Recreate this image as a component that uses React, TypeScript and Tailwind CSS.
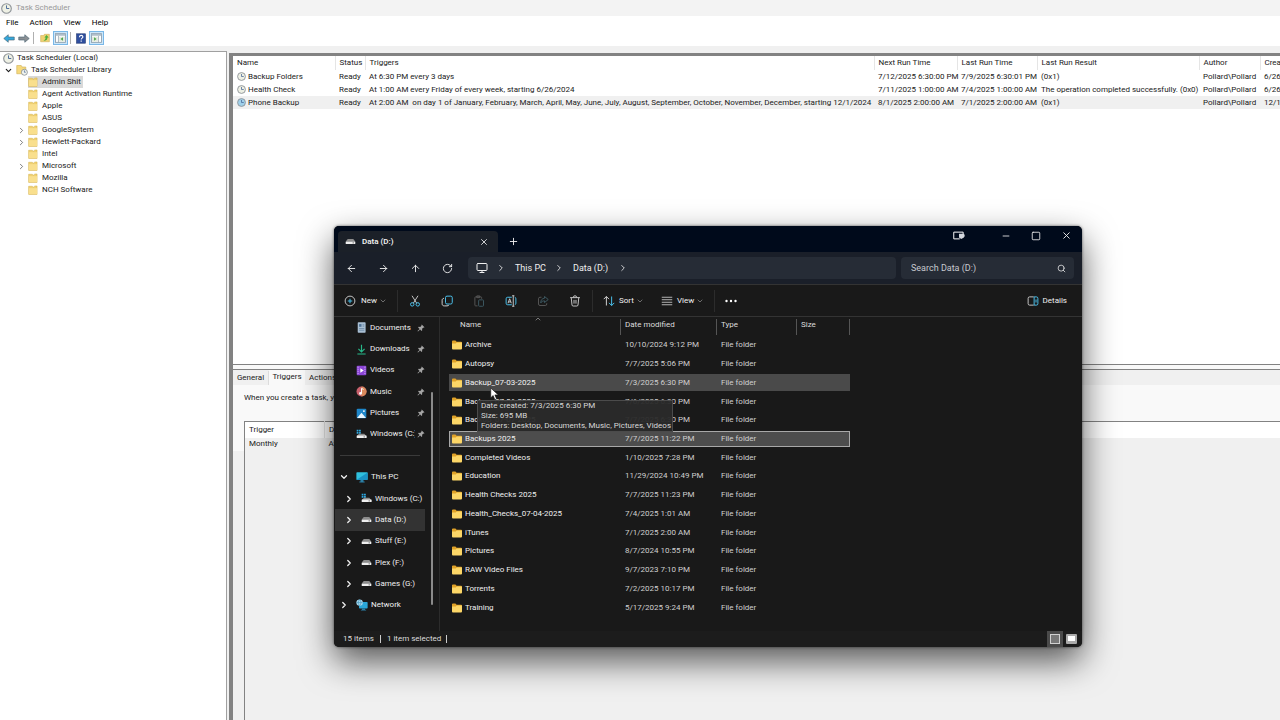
import React, { useState } from 'react';
import {
  ArrowLeft,
  ArrowRight,
  ArrowUp,
  ChevronDown,
  ChevronRight,
  ChevronUp,
  Minus,
  Monitor,
  Plus,
  RotateCw,
  Search,
  Square,
  X,
} from 'lucide-react';

const treeItems = [
  { name: 'Admin Shit' },
  { name: 'Agent Activation Runtime' },
  { name: 'Apple' },
  { name: 'ASUS' },
  { name: 'GoogleSystem', children: true },
  { name: 'Hewlett-Packard', children: true },
  { name: 'Intel' },
  { name: 'Microsoft', children: true },
  { name: 'Mozilla' },
  { name: 'NCH Software' },
];

const tasks = [
  {
    name: 'Backup Folders',
    triggers: 'At 6:30 PM every 3 days',
    next: '7/12/2025 6:30:00 PM',
    last: '7/9/2025 6:30:01 PM',
    result: '(0x1)',
    created: '6/26/2024',
  },
  {
    name: 'Health Check',
    triggers: 'At 1:00 AM every Friday of every week, starting 6/26/2024',
    next: '7/11/2025 1:00:00 AM',
    last: '7/4/2025 1:00:00 AM',
    result: 'The operation completed successfully. (0x0)',
    created: '6/26/2024',
  },
  {
    name: 'Phone Backup',
    triggers:
      'At 2:00 AM  on day 1 of January, February, March, April, May, June, July, August, September, October, November, December, starting 12/1/2024',
    next: '8/1/2025 2:00:00 AM',
    last: '7/1/2025 2:00:00 AM',
    result: '(0x1)',
    created: '12/1/2024',
  },
];

const folders = [
  { name: 'Archive', modified: '10/10/2024 9:12 PM' },
  { name: 'Autopsy', modified: '7/7/2025 5:06 PM' },
  { name: 'Backup_07-03-2025', modified: '7/3/2025 6:30 PM' },
  { name: 'Backup_07-06-2025', modified: '7/6/2025 6:30 PM' },
  { name: 'Backup_07-07-2025', modified: '7/7/2025 6:30 PM' },
  { name: 'Backups 2025', modified: '7/7/2025 11:22 PM' },
  { name: 'Completed Videos', modified: '1/10/2025 7:28 PM' },
  { name: 'Education', modified: '11/29/2024 10:49 PM' },
  { name: 'Health Checks 2025', modified: '7/7/2025 11:23 PM' },
  { name: 'Health_Checks_07-04-2025', modified: '7/4/2025 1:01 AM' },
  { name: 'iTunes', modified: '7/1/2025 2:00 AM' },
  { name: 'Pictures', modified: '8/7/2024 10:55 PM' },
  { name: 'RAW Video Files', modified: '9/7/2023 7:10 PM' },
  { name: 'Torrents', modified: '7/2/2025 10:17 PM' },
  { name: 'Training', modified: '5/17/2025 9:24 PM' },
];

/* ---------- icons ---------- */

const ClockIcon = ({ className = 'w-[11px] h-[11px]', face = '#eef0e4' }) => (
  <svg viewBox="0 0 16 16" className={`shrink-0 ${className}`}>
    <circle cx="8" cy="8" r="7" fill={face} stroke="#8d9297" strokeWidth="1.6" />
    <path d="M8 3.5V8h4" fill="none" stroke="#4a6a9a" strokeWidth="1.4" />
  </svg>
);

const TreeFolder = () => (
  <svg viewBox="0 0 16 16" className="w-[10px] h-[10px] shrink-0">
    <path d="M1 2h6l1 2 3-2.5h3.5V15H1z" fill="#f0d070" stroke="#d3b04c" strokeWidth="0.8" />
    <path d="M1.5 5h13v9.5h-13z" fill="#f9df8d" />
  </svg>
);

const LibraryIcon = () => (
  <svg viewBox="0 0 16 16" className="w-[12px] h-[12px] shrink-0">
    <path d="M1 2h6l1 2h5v9H1z" fill="#f6d97c" stroke="#cfae55" strokeWidth="0.8" />
    <circle cx="11.2" cy="11" r="4" fill="#f2f5ee" stroke="#7e858c" />
    <path d="M11.2 8.5V11H13" fill="none" stroke="#4a6a9a" />
  </svg>
);

const BlockArrow = ({ fill, flip = false }: { fill: string; flip?: boolean }) => (
  <svg viewBox="0 0 16 12" className={flip ? 'w-[12px] h-[9px] -scale-x-100' : 'w-[12px] h-[9px]'}>
    <path d="M1 6l6-5v3h8v4H7v3z" fill={fill} stroke="#44606e" strokeWidth="0.8" />
  </svg>
);

const UpFolderIcon = () => (
  <svg viewBox="0 0 16 16" className="w-[10px] h-[10px]">
    <path d="M1 4h5l1-2h8v12H1z" fill="#f0d272" stroke="#c9a94a" strokeWidth="0.8" />
    <path d="M4 12c3 0 5-2 5-5H7l3.5-4L14 7h-2c0 4-3 6-8 5z" fill="#4caf3c" />
  </svg>
);

const PaneIcon = ({ flip = false }: { flip?: boolean }) => (
  <svg viewBox="0 0 16 14" className={flip ? 'w-[11px] h-[10px] -scale-x-100' : 'w-[11px] h-[10px]'}>
    <rect x="0.7" y="0.7" width="14.6" height="12.6" fill="#fff" stroke="#8799a8" strokeWidth="1.2" />
    <path d="M1 2.5h14" stroke="#a9b9c6" strokeWidth="2.4" />
    <path d="M5 4v9" stroke="#8799a8" />
    <rect x="6" y="5" width="8.500" height="7.500" fill="#e3eadf" />
    <path d="M11.500 6v5L8 8.500z" fill="#46a345" />
  </svg>
);

const HelpIcon = () => (
  <svg viewBox="0 0 16 16" className="w-[10px] h-[11px]">
    <rect x="1" y="0.5" width="14" height="15" fill="#2f4f9f" stroke="#1e356f" />
    <path d="M5.500 6c0-4 5.500-4 5.500-.5 0 2-2.700 2-2.700 4.200M8.300 11.300v2" fill="none" stroke="#fff" strokeWidth="1.8" />
  </svg>
);

const DriveIcon = ({ className = 'w-[11px] h-[11px]' }) => (
  <svg viewBox="0 0 16 16" className={`shrink-0 ${className}`}>
    <path d="M4 4.500h8L15 8H1z" fill="#8c8c8c" />
    <rect x="1" y="8" width="14" height="3.600" rx="0.800" fill="#efefef" />
    <path d="M11 10h2" stroke="#3a3a3a" />
  </svg>
);

const SystemDriveIcon = () => (
  <svg viewBox="0 0 16 16" className="w-[11px] h-[11px] shrink-0">
    <path d="M1 1h2.600v2.600H1zM4.400 1H7v2.600H4.400zM1 4.400h2.600V7H1zM4.400 4.400H7V7H4.400z" fill="#2ea8e0" />
    <path d="M4.500 7H12l3 3H1z" fill="#8c8c8c" />
    <rect x="1" y="9.500" width="14.500" height="3.600" rx="0.800" fill="#efefef" />
    <path d="M11 11.500h2" stroke="#3a3a3a" />
  </svg>
);

const FolderIcon = () => (
  <svg viewBox="0 0 16 14" className="w-[12px] h-[10px] shrink-0">
    <path d="M1 2c0-.8.5-1.300 1.300-1.300h3.500L7.500 2.500h6.200c.8 0 1.300.5 1.300 1.300V9H1z" fill="#e0a228" />
    <path d="M1 4.800h5.200l1.500-1.300H15v8.400c0 .8-.5 1.300-1.300 1.300H2.300c-.8 0-1.300-.5-1.300-1.300z" fill="#fcd667" />
  </svg>
);

const DocumentsIcon = () => (
  <svg viewBox="0 0 16 16" className="w-[11px] h-[11px]">
    <rect x="2.500" y="0.500" width="11.500" height="15" rx="1" fill="#a9bfd3" />
    <rect x="4.500" y="3" width="3.500" height="4" fill="#4f7396" />
    <path d="M9.500 4H12M9.500 6H12M4.500 9.500H12M4.500 12H12" stroke="#5d7c99" />
  </svg>
);

const DownloadsIcon = () => (
  <svg viewBox="0 0 16 16" className="w-[11px] h-[11px]">
    <path d="M8 1v10M3.500 7L8 11.500 12.500 7M2 14.500h12" fill="none" stroke="#27b98a" strokeWidth="1.700" />
  </svg>
);

const VideosIcon = () => (
  <svg viewBox="0 0 16 16" className="w-[11px] h-[11px]">
    <rect x="1" y="1" width="14" height="14" rx="1.500" fill="#8b45d6" />
    <path d="M3 2.500v11M13 2.500v11" stroke="#d8b8f8" strokeWidth="1.400" strokeDasharray="1.500 1.500" />
    <path d="M6.300 4.800v6.400L11.300 8z" fill="#fff" />
  </svg>
);

const MusicIcon = () => (
  <svg viewBox="0 0 16 16" className="w-[11px] h-[11px]">
    <circle cx="8" cy="8" r="7.300" fill="#c8606c" />
    <path d="M8 .7A7.300 7.300 0 0 1 8 15.300z" fill="#d98a5c" />
    <path d="M8 10.800V3.500l3 1.500" fill="none" stroke="#fff" strokeWidth="1.400" />
    <circle cx="6.500" cy="10.800" r="2" fill="#fff" />
  </svg>
);

const PicturesIcon = () => (
  <svg viewBox="0 0 16 16" className="w-[11px] h-[11px]">
    <rect x="1" y="1" width="14" height="14" rx="1.500" fill="#1d86c9" />
    <path d="M1.500 14.500L8 7l6.500 7.500z" fill="#e8f6ff" />
    <circle cx="11.500" cy="4.500" r="1.400" fill="#fff" />
  </svg>
);

const ThisPcIcon = () => (
  <svg viewBox="0 0 16 16" className="w-[12px] h-[12px]">
    <rect x="0.500" y="1.500" width="15" height="10.500" rx="1" fill="#2fc0dd" />
    <path d="M.5 12L15.500 2v9a1 1 0 0 1-1 1z" fill="#1a93c4" />
    <path d="M6 12h4v2.500H6zM4.500 14h7v1.200h-7z" fill="#2b7fa5" />
  </svg>
);

const NetworkIcon = () => (
  <svg viewBox="0 0 16 16" className="w-[12px] h-[12px]">
    <rect x="4" y="4" width="11.500" height="8.500" rx="1" fill="#2aa7d8" />
    <path d="M8 12.500h4v2H8zM6.500 14.200h7v1.200h-7z" fill="#2b7fa5" />
    <circle cx="4.800" cy="4.800" r="4.300" fill="#a6d8ee" />
    <path d="M.8 4.800h8M4.800.8c-2.500 2.500-2.500 5.500 0 8M4.800.8c2.500 2.500 2.500 5.500 0 8" fill="none" stroke="#3c8fb8" strokeWidth="0.800" />
  </svg>
);

const PinIcon = () => (
  <svg viewBox="0 0 16 16" className="w-[8px] h-[8px] shrink-0">
    <path d="M9.500 1L15 6.500l-1.500.8-.8-.2-2.500 2.500.2 3-1.200 1.200-3-3L2 15l-1-1 4.200-4.200-3-3L3.400 5.600l3 .2L9 3.300 8.700 2.500z" fill="#a5a5a5" />
  </svg>
);

const CutIcon = () => (
  <svg viewBox="0 0 16 16" fill="none" className="w-[12px] h-[12px]">
    <path d="M4 1l6.300 10M12 1L5.700 11" stroke="#d5d5d5" strokeWidth="1.200" />
    <circle cx="4.300" cy="12.500" r="2.300" stroke="#4cc2ee" strokeWidth="1.300" />
    <circle cx="11.700" cy="12.500" r="2.300" stroke="#4cc2ee" strokeWidth="1.300" />
  </svg>
);

const CopyIcon = () => (
  <svg viewBox="0 0 16 16" fill="none" className="w-[12px] h-[12px]">
    <rect x="6" y="1.500" width="9" height="10.500" rx="2" stroke="#4cc2ee" strokeWidth="1.300" />
    <path d="M4 4.500c-1.500 0-2.500 1-2.500 2.500v4.500c0 2 1 3 3 3H8c1.200 0 2-.5 2.500-1" stroke="#d5d5d5" strokeWidth="1.300" />
  </svg>
);

const PasteIcon = () => (
  <svg viewBox="0 0 16 16" fill="none" className="w-[12px] h-[12px]">
    <path d="M6 14.500H3.500a1 1 0 0 1-1-1V3.500a1 1 0 0 1 1-1h7a1 1 0 0 1 1 1V5M5 1.200h4v2.300H5z" stroke="#5a5a5a" strokeWidth="1.200" />
    <rect x="7.500" y="6.500" width="6.500" height="8.500" rx="1" stroke="#3f5d68" strokeWidth="1.200" />
  </svg>
);

const RenameIcon = () => (
  <svg viewBox="0 0 16 16" fill="none" className="w-[12px] h-[12px]">
    <path d="M9 3H3.500a2 2 0 0 0-2 2v6a2 2 0 0 0 2 2H9M13 3a2 2 0 0 1 1.500 2v6a2 2 0 0 1-1.500 2" stroke="#4cc2ee" strokeWidth="1.300" />
    <path d="M11 1v14M9.500 1h3M9.500 15h3M4 11l2.200-6 2.200 6M4.700 9.200h3" stroke="#d5d5d5" strokeWidth="1.200" />
  </svg>
);

const ShareIcon = () => (
  <svg viewBox="0 0 16 16" fill="none" className="w-[12px] h-[12px]">
    <path d="M6 3H4a2 2 0 0 0-2 2v7a2 2 0 0 0 2 2h7a2 2 0 0 0 2-2v-1" stroke="#5a5a5a" strokeWidth="1.200" />
    <path d="M10 2l5 4-5 4V7.800C7.500 7.800 6 8.800 5 10.500c0-4 2-6 5-6.200z" stroke="#3f5d68" strokeWidth="1.200" />
  </svg>
);

const DeleteIcon = () => (
  <svg viewBox="0 0 16 16" fill="none" className="w-[12px] h-[12px]">
    <path d="M1.500 3.500h13M5.800 3.200a2.200 2.200 0 0 1 4.400 0M3 3.800l1 9.500c.1.900.6 1.400 1.500 1.400h5c.9 0 1.400-.5 1.500-1.400l1-9.500M6.700 6.500v5M9.300 6.500v5" stroke="#d5d5d5" strokeWidth="1.200" />
  </svg>
);

const SortIcon = () => (
  <svg viewBox="0 0 16 16" fill="none" className="w-[12px] h-[12px]">
    <path d="M4.500 14V2M1 5.500L4.500 2 8 5.500" stroke="#d5d5d5" strokeWidth="1.300" />
    <path d="M11.500 2v12M8 10.500l3.500 3.500 3.500-3.500" stroke="#4cc2ee" strokeWidth="1.300" />
  </svg>
);

const ViewIcon = () => (
  <svg viewBox="0 0 16 16" className="w-[12px] h-[12px]">
    <path d="M1 3h14M1 6.300h14M1 9.700h14M1 13h14" stroke="#d5d5d5" strokeWidth="1.100" />
  </svg>
);

const DetailsIcon = () => (
  <svg viewBox="0 0 16 16" fill="none" className="w-[12px] h-[12px]">
    <path d="M9 2.500H3.500a2 2 0 0 0-2 2v7a2 2 0 0 0 2 2H9" stroke="#d5d5d5" strokeWidth="1.200" />
    <path d="M9.500 2.500h3a2 2 0 0 1 2 2v7a2 2 0 0 1-2 2h-3zM12 6v4" stroke="#4cc2ee" strokeWidth="1.300" />
  </svg>
);

const NewIcon = () => (
  <svg viewBox="0 0 16 16" fill="none" className="w-[12px] h-[12px]">
    <circle cx="8" cy="8" r="6.500" stroke="#d5d5d5" strokeWidth="1.200" />
    <path d="M8 5v6M5 8h6" stroke="#4cc2ee" strokeWidth="1.300" />
  </svg>
);

const TabToolIcon = () => (
  <svg viewBox="0 0 16 12" fill="none" className="w-[12px] h-[9px]">
    <path d="M9 10.500H1V1.500h12.500V4" stroke="#fff" strokeWidth="1.300" />
    <path d="M8 3.500h6.500c1.500 1.500 1.500 3.500 0 5L11 10.500 8 8.500z" fill="#d4d7dd" />
  </svg>
);

const quickAccess = [
  { name: 'Documents', icon: DocumentsIcon },
  { name: 'Downloads', icon: DownloadsIcon },
  { name: 'Videos', icon: VideosIcon },
  { name: 'Music', icon: MusicIcon },
  { name: 'Pictures', icon: PicturesIcon },
  { name: 'Windows (C:)', icon: SystemDriveIcon },
];

const drives = [
  { name: 'Windows (C:)', icon: SystemDriveIcon },
  { name: 'Data (D:)', icon: DriveIcon },
  { name: 'Stuff (E:)', icon: DriveIcon },
  { name: 'Plex (F:)', icon: DriveIcon },
  { name: 'Games (G:)', icon: DriveIcon },
];

/* ---------- Task Scheduler ---------- */

const SchedulerTree = () => {
  const [selected, setSelected] = useState('Admin Shit');

  return (
    <aside className="w-[227px] shrink-0 border border-[#a0a0a0] border-l-0 border-b-0 bg-white">
      <button className="flex h-3 items-center gap-[3px] pl-[3px]">
        <ClockIcon />
        Task Scheduler (Local)
      </button>
      <button className="flex h-3 items-center gap-[3px] pl-1">
        <ChevronDown strokeWidth={3} className="w-[9px] h-[9px]" />
        <LibraryIcon />
        Task Scheduler Library
      </button>
      <ul>
        {treeItems.map((item) => (
          <li key={item.name} className="flex h-3 items-center pl-[17px]">
            <span className="w-[11px]">
              {item.children && <ChevronRight className="w-[9px] h-[9px] text-[#555]" />}
            </span>
            <button
              onClick={() => setSelected(item.name)}
              className={`flex h-3 items-center gap-1 pr-0.5 ${
                selected === item.name ? 'bg-[#d9d9d9]' : ''
              }`}
            >
              <TreeFolder />
              {item.name}
            </button>
          </li>
        ))}
      </ul>
    </aside>
  );
};

const TaskTable = () => (
  <div className="h-[309px] shrink-0 overflow-hidden border-b border-[#828282] bg-white">
    <table className="w-[1100px] table-fixed border-collapse text-left">
      <thead>
        <tr className="h-[14px] *:border-r *:border-[#e5e5e5] *:pl-1 *:font-normal">
          <th className="w-[102px]">Name</th>
          <th className="w-[30px]">Status</th>
          <th className="w-[509px]">Triggers</th>
          <th className="w-[83px]">Next Run Time</th>
          <th className="w-[80px]">Last Run Time</th>
          <th className="w-[162px]">Last Run Result</th>
          <th className="w-[61px]">Author</th>
          <th>Created</th>
        </tr>
      </thead>
      <tbody>
        {tasks.map((task, i) => (
          <tr
            key={task.name}
            className={`h-[13px] *:whitespace-pre *:pl-1 ${i === 2 ? 'bg-[#f0f0f0]' : ''}`}
          >
            <td>
              <div className="flex items-center gap-0.5">
                <ClockIcon className="w-[9px] h-[9px]" face={i === 2 ? '#9fd0ea' : '#eef0e4'} />
                {task.name}
              </div>
            </td>
            <td>Ready</td>
            <td>{task.triggers}</td>
            <td>{task.next}</td>
            <td>{task.last}</td>
            <td>{task.result}</td>
            <td>Pollard\Pollard</td>
            <td>{task.created}</td>
          </tr>
        ))}
      </tbody>
    </table>
  </div>
);

const TaskDetails = () => (
  <div className="flex flex-1 flex-col border-t border-[#828282] bg-[#f0f0f0]">
    <div className="flex h-[15px] items-end">
      <button className="h-[14px] w-9 border-r border-[#dcdcdc]">General</button>
      <button className="h-full w-9 bg-[#f9f9f9] pb-0.5">Triggers</button>
      <button className="h-[14px] px-1">Actions</button>
    </div>
    <div className="bg-[#f9f9f9] pl-[11px] pt-[7px]">
      <p className="h-[29px] whitespace-nowrap">
        When you create a task, you can specify the conditions that will trigger the task.
      </p>
      <table className="w-full table-fixed border-collapse border-l border-t border-[#828282] text-left">
        <thead>
          <tr className="h-4 bg-white *:pl-1 *:font-normal">
            <th className="w-20 border-r border-[#e5e5e5]">Trigger</th>
            <th>Details</th>
          </tr>
        </thead>
        <tbody>
          <tr className="h-[13px] bg-[#f0f0f0] *:pl-1">
            <td>Monthly</td>
            <td>At 2:00 AM on day 1 of January, February, March</td>
          </tr>
        </tbody>
      </table>
    </div>
    <div className="ml-[11px] flex-1 border-l border-[#828282] bg-[#f0f0f0]" />
  </div>
);

const TaskScheduler = () => (
  <div className="flex h-screen flex-col bg-[#f0f0f0] text-[8px] leading-[12px] text-[#1a1a1a]">
    <header className="flex h-4 items-center gap-1 bg-[#f3f3f3] pl-[1px] text-[#999]">
      <ClockIcon />
      Task Scheduler
    </header>
    <nav className="flex h-[14px] items-center gap-[11px] bg-white pl-[6px] text-black">
      <button>File</button>
      <button>Action</button>
      <button>View</button>
      <button>Help</button>
    </nav>
    <div className="flex h-4 items-center bg-white pl-[3px]">
      <button aria-label="Back"><BlockArrow fill="#35a8dc" /></button>
      <button aria-label="Forward" className="ml-[3px]"><BlockArrow fill="#8a8f93" flip /></button>
      <span className="mx-[3px] h-3 w-px bg-[#b0b0b0]" />
      <button aria-label="Up" className="mx-[3px]"><UpFolderIcon /></button>
      <button aria-label="Console tree" className="flex h-[14px] w-[15px] items-center justify-center border border-[#79b7e7] bg-[#cce6f9]">
        <PaneIcon />
      </button>
      <span className="mx-[2px] h-3 w-px bg-[#b0b0b0]" />
      <button aria-label="Help" className="mx-[3px]"><HelpIcon /></button>
      <button aria-label="Action pane" className="flex h-[14px] w-[15px] items-center justify-center border border-[#79b7e7] bg-[#cce6f9]">
        <PaneIcon flip />
      </button>
    </div>
    <div className="flex min-h-0 flex-1 pt-[5px]">
      <SchedulerTree />
      <main className="ml-0.5 mt-0.5 flex min-w-0 flex-1 flex-col overflow-hidden border-l-4 border-t-[3px] border-[#828282]">
        <TaskTable />
        <div className="h-1 shrink-0 bg-[#f9f9f9]" />
        <TaskDetails />
      </main>
    </div>
  </div>
);

/* ---------- File Explorer ---------- */

const ExplorerTitleBar = () => (
  <div className="flex h-[26px] bg-[#000a1b]">
    <div className="ml-1 mt-[5px] flex w-[160px] items-center rounded-t bg-[#1b2028] pl-[7px] pr-[9px] font-semibold">
      <DriveIcon />
      <span className="ml-[6px] flex-1">Data (D:)</span>
      <button aria-label="Close tab"><X className="w-[10px] h-[10px]" /></button>
    </div>
    <button aria-label="New tab" className="ml-[10px] mt-[5px]"><Plus className="w-[11px] h-[11px]" /></button>
    <div className="ml-auto flex h-[19px] items-center">
      <button aria-label="Tab tools" className="mr-[36px]"><TabToolIcon /></button>
      <button aria-label="Minimize" className="mr-5"><Minus className="w-[10px] h-[10px]" /></button>
      <button aria-label="Maximize" className="mr-5"><Square className="w-[10px] h-[10px]" /></button>
      <button aria-label="Close" className="mr-[10px]"><X className="w-[11px] h-[11px]" /></button>
    </div>
  </div>
);

const ExplorerNav = () => (
  <div className="flex h-8 items-center bg-[#1a1f29] pl-3 pr-2 text-[9px]">
    <div className="flex gap-[21px]">
      <button aria-label="Back"><ArrowLeft className="w-[11px] h-[11px]" /></button>
      <button aria-label="Forward"><ArrowRight className="w-[11px] h-[11px]" /></button>
      <button aria-label="Up"><ArrowUp className="w-[11px] h-[11px]" /></button>
      <button aria-label="Refresh"><RotateCw className="w-[11px] h-[11px]" /></button>
    </div>
    <div className="ml-[15px] flex h-[22px] flex-1 items-center rounded-sm bg-[#262c36] pl-2">
      <Monitor className="w-3 h-3" />
      <ChevronRight className="ml-2 w-[10px] h-[10px]" />
      <button className="ml-[9px] w-8 text-left">This PC</button>
      <ChevronRight className="ml-[7px] w-[10px] h-[10px]" />
      <button className="ml-[9px] w-[37px] text-left">Data (D:)</button>
      <ChevronRight className="ml-2 w-[10px] h-[10px]" />
    </div>
    <label className="ml-[5px] flex h-[22px] w-[173px] items-center rounded-sm bg-[#262c36] pl-[10px] pr-2">
      <input
        type="text"
        aria-label="Search Data (D:)"
        placeholder="Search Data (D:)"
        className="min-w-0 flex-1 bg-transparent outline-none placeholder:text-[#c6c9ce]"
      />
      <Search className="w-[9px] h-[9px]" />
    </label>
  </div>
);

const ExplorerToolbar = () => (
  <div className="flex h-[33px] items-center border-y border-[#333] pl-[10px] pr-[15px]">
    <button className="flex items-center">
      <NewIcon />
      <span className="ml-[5px] w-[18px] text-left">New</span>
      <ChevronDown className="w-2 h-2 text-[#999]" />
    </button>
    <span className="ml-[10px] h-[22px] w-px bg-[#2c2c2c]" />
    <div className="ml-[11px] flex w-[172px] items-center justify-between">
      <button aria-label="Cut"><CutIcon /></button>
      <button aria-label="Copy"><CopyIcon /></button>
      <button aria-label="Paste"><PasteIcon /></button>
      <button aria-label="Rename"><RenameIcon /></button>
      <button aria-label="Share"><ShareIcon /></button>
      <button aria-label="Delete"><DeleteIcon /></button>
    </div>
    <span className="ml-[11px] h-[22px] w-px bg-[#2c2c2c]" />
    <button className="ml-[10px] flex items-center">
      <SortIcon />
      <span className="ml-1 w-[17px] text-left">Sort</span>
      <ChevronDown className="w-2 h-2 text-[#999]" />
    </button>
    <button className="ml-[17px] flex items-center">
      <ViewIcon />
      <span className="ml-1 w-[19px] text-left">View</span>
      <ChevronDown className="w-2 h-2 text-[#999]" />
    </button>
    <span className="ml-[10px] h-[22px] w-px bg-[#2c2c2c]" />
    <button aria-label="More" className="ml-[10px]">
      <svg viewBox="0 0 12 4" className="w-3 h-1" fill="#fff">
        <circle cx="1.500" cy="2" r="1.200" />
        <circle cx="6" cy="2" r="1.200" />
        <circle cx="10.500" cy="2" r="1.200" />
      </svg>
    </button>
    <button className="ml-auto flex items-center gap-1">
      <DetailsIcon />
      Details
    </button>
  </div>
);

const ExplorerSidebar = () => (
  <aside className="relative w-[106px] shrink-0 border-r border-[#2c2c2c] pl-[1px]">
    <div className="grid h-[299px] w-[90px] auto-rows-fr">
      {quickAccess.map(({ name, icon: Icon }) => (
        <button key={name} className="flex items-center pl-[21px]">
          <Icon />
          <span className="ml-[3px] w-[45px] overflow-hidden whitespace-nowrap text-left">{name}</span>
          <span className="ml-auto"><PinIcon /></span>
        </button>
      ))}
      <div className="flex items-center pl-[5px]">
        <span className="h-px w-20 bg-[#3a3a3a]" />
      </div>
      <button className="flex items-center pl-1">
        <ChevronDown strokeWidth={3} className="w-[10px] h-[10px]" />
        <span className="ml-[7px] mr-[3px]"><ThisPcIcon /></span>
        This PC
      </button>
      {drives.map(({ name, icon: Icon }) => (
        <button
          key={name}
          className={`flex items-center whitespace-nowrap pl-[9px] ${
            name === 'Data (D:)' ? 'bg-[#333]' : ''
          }`}
        >
          <ChevronRight strokeWidth={3} className="w-[10px] h-[10px]" />
          <span className="ml-[7px] mr-[3px] w-[11px]"><Icon /></span>
          {name}
        </button>
      ))}
      <button className="flex items-center pl-1">
        <ChevronRight strokeWidth={3} className="w-[10px] h-[10px]" />
        <span className="ml-[7px] mr-[3px]"><NetworkIcon /></span>
        Network
      </button>
    </div>
    {/* scroll thumb */}
    <div className="absolute bottom-[26px] right-[6px] top-[75px] w-[2px] rounded bg-[#8a8a8a]" />
  </aside>
);

const FolderTip = () => (
  <div
    role="tooltip"
    className="absolute left-[37px] top-[83px] w-[196px] whitespace-nowrap border border-[#4b4b4b] bg-[#2a2a2a]/95 px-[3px] leading-[10px] text-[#d8d8d8]"
  >
    <p>Date created: 7/3/2025 6:30 PM</p>
    <p>Size: 695 MB</p>
    <p>Folders: Desktop, Documents, Music, Pictures, Videos</p>
  </div>
);

const FileList = () => {
  const [selected, setSelected] = useState('Backups 2025');

  return (
    <section className="relative min-w-0 flex-1 pl-[9px]">
      <table className="h-[301px] w-[401px] table-fixed border-separate border-spacing-x-0 border-spacing-y-0.5 text-left">
        <thead>
          <tr className="h-4 *:h-4 *:border-r *:border-[#555] *:align-top *:pl-1 *:font-normal *:text-[#dcdcdc]">
            <th className="w-[172px]"><span className="pl-[7px]">Name</span></th>
            <th className="w-24">Date modified</th>
            <th className="w-20">Type</th>
            <th>Size</th>
          </tr>
        </thead>
        <tbody>
          {folders.map((folder) => (
            <tr
              key={folder.name}
              onClick={() => setSelected(folder.name)}
              className={`whitespace-nowrap ${
                selected === folder.name
                  ? 'bg-[#4d4d4d] outline outline-1 -outline-offset-1 outline-[#a8a8a8]'
                  : folder.name === 'Backup_07-03-2025'
                    ? 'bg-[#4a4a4a]'
                    : ''
              }`}
            >
              <td>
                <div className="flex items-center gap-0.5 pl-0.5">
                  <FolderIcon />
                  {folder.name}
                </div>
              </td>
              <td className="pl-1 text-[#cfcfcf]">{folder.modified}</td>
              <td className="pl-1 text-[#cfcfcf]">File folder</td>
              <td />
            </tr>
          ))}
        </tbody>
      </table>
      <ChevronUp className="absolute left-[94px] top-[-2px] w-[8px] h-[8px] text-[#aaa]" />
      <FolderTip />
      <svg viewBox="0 0 12 18" className="absolute left-[50px] top-[70px] w-[9px] h-[14px]">
        <path d="M1 1v13l3.200-3 2.300 5.500 2.300-1L6.500 10.200H11z" fill="#fff" stroke="#111" strokeWidth="0.800" />
      </svg>
    </section>
  );
};

const FileExplorer = () => (
  <div className="absolute left-[334px] top-[226px] flex h-[421px] w-[748px] flex-col overflow-hidden rounded-[5px] bg-[#191919] text-[8px] leading-[12px] text-[#f0f0f0] shadow-[0_0_3px_rgba(0,0,0,0.6),0_14px_34px_rgba(0,0,0,0.65)]">
    <ExplorerTitleBar />
    <ExplorerNav />
    <ExplorerToolbar />
    <div className="flex min-h-0 flex-1">
      <ExplorerSidebar />
      <FileList />
    </div>
    <footer className="flex h-4 items-center bg-[#1c1c1c] pl-[9px] text-[#dcdcdc]">
      <span>15 items</span>
      <span className="mx-[6px] h-2 w-px bg-[#ccc]" />
      <span>1 item selected</span>
      <span className="mx-[5px] h-2 w-px bg-[#ccc]" />
      <button aria-label="Details view" className="ml-auto flex h-4 w-4 items-center justify-center bg-[#4a4a4a]">
        <span className="h-[10px] w-[10px] border border-[#d0d0d0] bg-[#777]" />
      </button>
      <button aria-label="Thumbnail view" className="mr-[3px] flex h-4 w-4 items-center justify-center">
        <span className="h-[10px] w-[11px] rounded-[1px] border-2 border-b-[3px] border-[#aaa] bg-white" />
      </button>
    </footer>
  </div>
);

const App = () => (
  <div className="relative h-screen overflow-hidden font-[Roboto,'Liberation_Sans',sans-serif]">
    <TaskScheduler />
    <FileExplorer />
  </div>
);

export default App;
